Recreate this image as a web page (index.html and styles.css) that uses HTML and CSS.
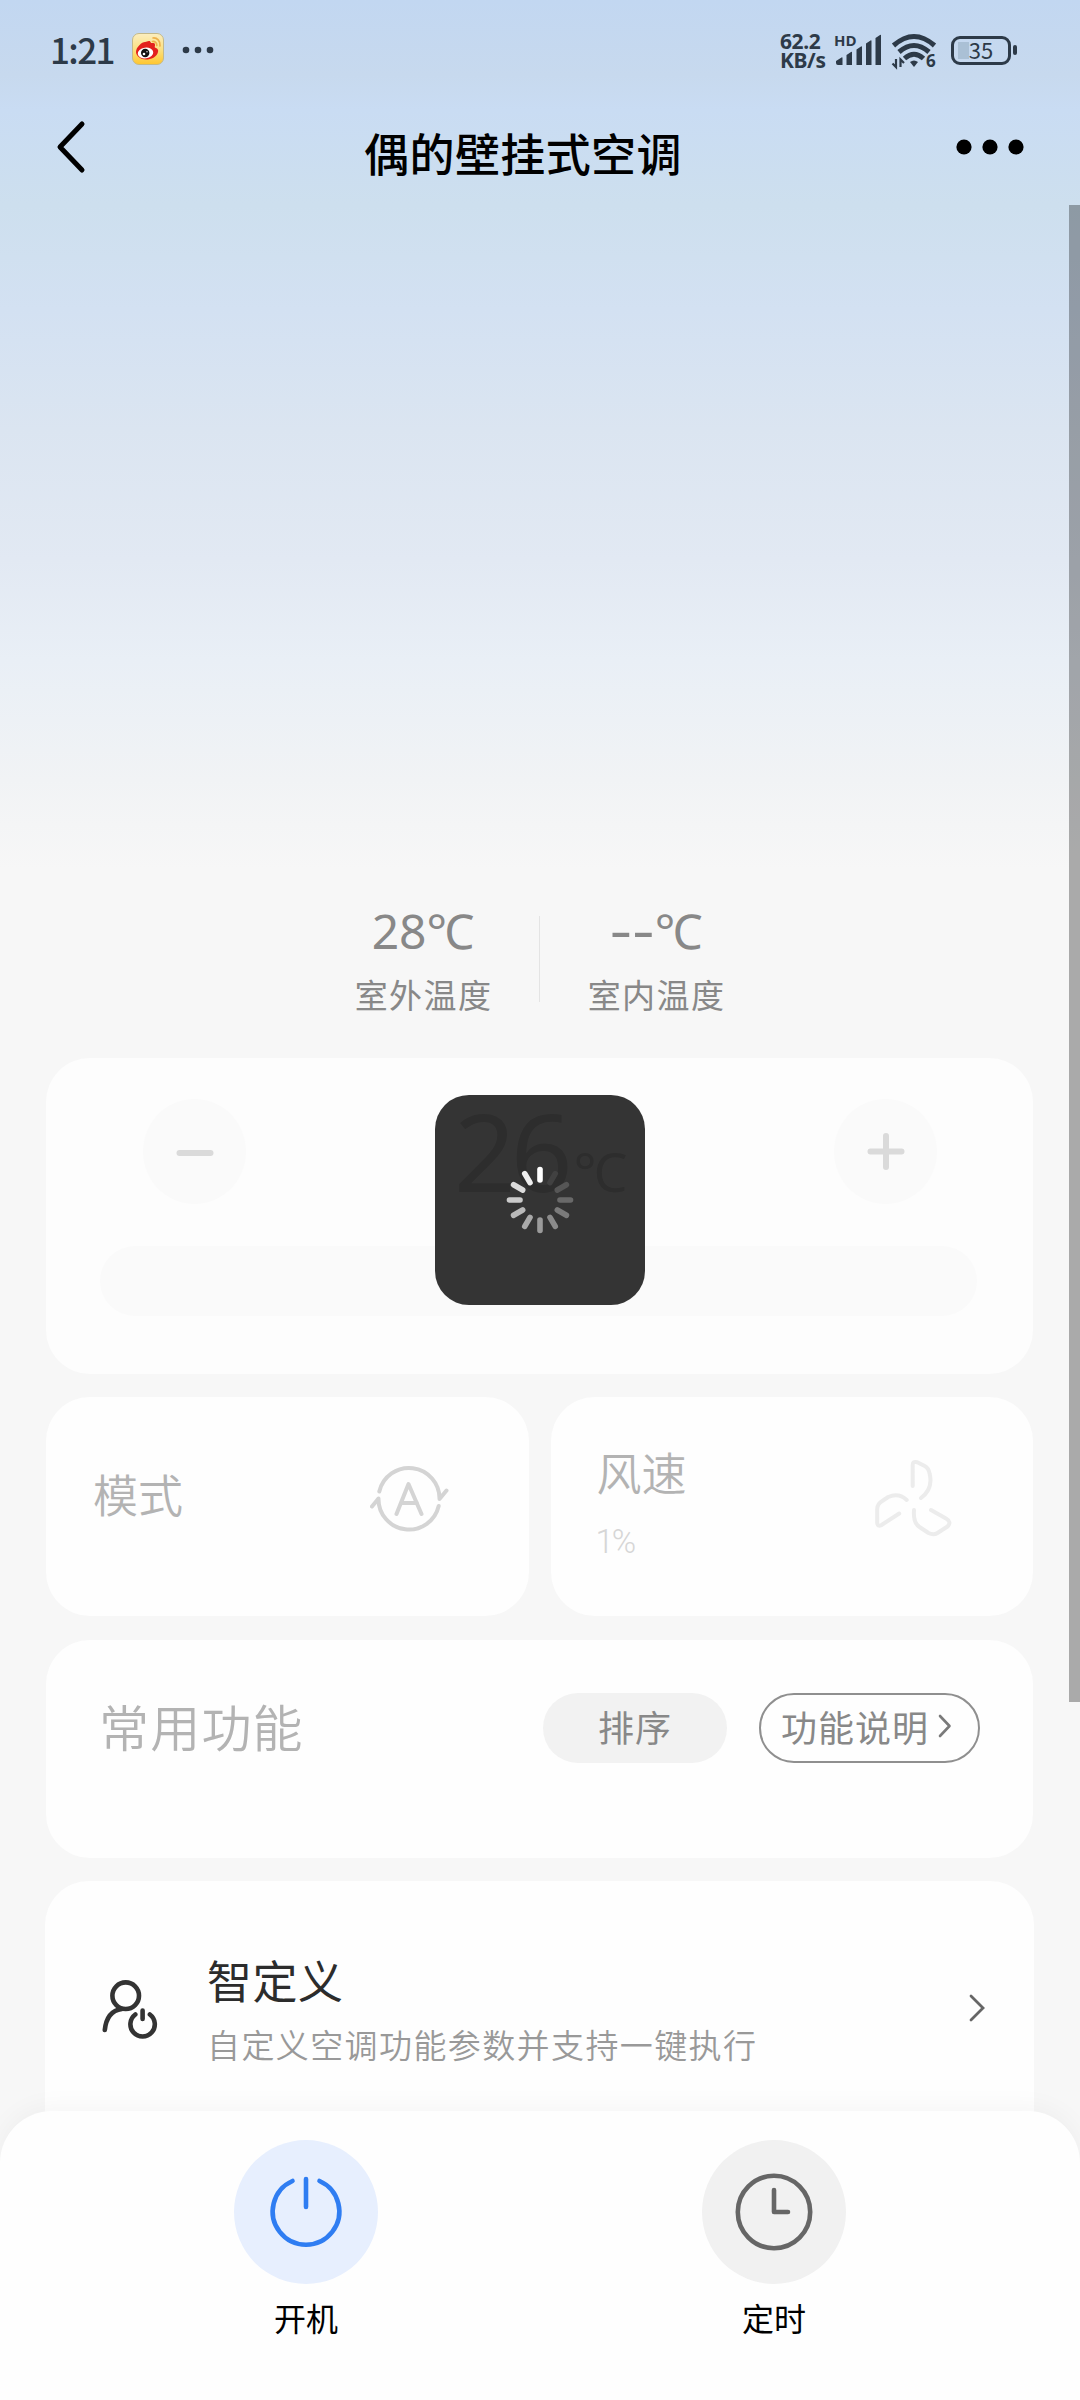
FILE: index.html
```html
<!DOCTYPE html>
<html lang="zh-CN">
<head>
<meta charset="utf-8">
<title>偶的壁挂式空调</title>
<link rel="stylesheet" href="styles.css">
</head>
<body>
<div class="screen">
  <header class="status">
    <span class="clock">1:21</span>
    <svg class="weibo" viewBox="0 0 32 32">
      <defs><linearGradient id="wb" x1="0" y1="0" x2="0" y2="1"><stop offset="0" stop-color="#fbeec0"/><stop offset=".55" stop-color="#fbdf7c"/><stop offset="1" stop-color="#ffc62e"/></linearGradient></defs>
      <rect x=".5" y=".5" width="31" height="31" rx="6.5" fill="url(#wb)" stroke="#c3b98a"/>
      <path d="M4 19c0-5 6-10 9-10 2 0 2-1 4-1s1 2 3 2 3 0 3 2-1 2 1 3 2.500 2 2 4c-1 5-7 7.500-12 7.500S4 23 4 19z" fill="#e3201d"/>
      <ellipse cx="13.500" cy="20" rx="7.800" ry="5.400" fill="#fff" transform="rotate(-8 13.500 20)"/>
      <circle cx="13.200" cy="20" r="4.200" fill="#111"/><circle cx="12" cy="21" r="1.300" fill="#fff"/><circle cx="15" cy="18.800" r=".7" fill="#fff"/>
      <path d="M21 5c4-.5 7.500 3 7 8M20.500 8.500c2.500-.3 4.500 1.500 4.300 4" fill="none" stroke="#eeb04a" stroke-width="1.700" stroke-linecap="round"/>
    </svg>
    <svg class="more-notes" viewBox="0 0 32 8" fill="#2d3a48"><circle cx="4" cy="4" r="3.300"/><circle cx="16" cy="4" r="3.300"/><circle cx="28" cy="4" r="3.300"/></svg>
    <span class="net"><span>62.2</span><span>KB/s</span></span>
    <span class="signal">
      <span class="hd">HD</span>
      <svg viewBox="0 0 48 32" fill="#2d3a48"><path d="M2 27l5.500-3.500q1-.5 1 .5V31H4q-2 0-2-2zM12.500 21l4.500-3q1-.5 1 .5v12.500h-5.500zM22.500 15.500l4.500-3q1-.5 1 .5v18h-5.500zM32 9.500l4.500-3q1-.5 1 .5v24h-5.500zM41.500 4l4.500-3q1-.5 1 .5v29.500h-5.500z"/></svg>
    </span>
    <svg class="wifi" viewBox="0 0 46 38" fill="none" stroke="#2d3a48" stroke-width="5">
      <path d="M2.500 12.500q20.500-18 41 0M8 19q15-13 30 0M13.500 25.500q9.500-8.500 19 0"/>
      <path d="M19 29q4-3 8 0l-4 5z" fill="#2d3a48" stroke="none"/>
      <path d="M5 26v8l-3.500-3.500M9.500 34v-7.500l3.500 3.500" stroke-width="2.200"/>
      <text x="35" y="34" class="wifi-gen">6</text>
    </svg>
    <span class="battery"><span>35</span></span>
  </header>

  <nav class="titlebar">
    <svg class="back" viewBox="0 0 32 54"><path d="M27 4L5 27l22 23"/></svg>
    <h1>偶的壁挂式空调</h1>
    <svg class="menu" viewBox="0 0 68 16"><circle cx="8" cy="8" r="7.600"/><circle cx="34" cy="8" r="7.600"/><circle cx="60" cy="8" r="7.600"/></svg>
  </nav>

  <main class="content">
    <section class="temps">
      <div class="temp"><div class="value">28℃</div><div class="label">室外温度</div></div>
      <div class="divider"></div>
      <div class="temp"><div class="value"><span class="dashes">--</span>℃</div><div class="label">室内温度</div></div>
    </section>

    <section class="card target">
      <div class="stepper">
        <button class="round"><svg viewBox="0 0 40 40"><path d="M4.500 21h31"/></svg></button>
        <div class="setpoint">26<span>℃</span></div>
        <button class="round"><svg viewBox="0 0 40 40"><path d="M4.500 19.500h31M20 4v31"/></svg></button>
      </div>
      <div class="track"></div>
    </section>

    <section class="pair">
      <div class="card tile">
        <div class="tile-name">模式</div>
        <svg class="mode-icon" viewBox="370 1460 80 80"><path d="M379.300 1491.500A30.500 30.500 0 0 1 439.500 1499l7-8.500M438.700 1506A30.500 30.500 0 0 1 378.500 1498.500l-6.500 8M396.500 1514l12-30 13 30M401.500 1503h15.500"/></svg>
      </div>
      <div class="card tile fan">
        <div><div class="tile-name">风速</div><div class="percent">1%</div></div>
        <svg class="fan-icon" viewBox="870 1455 86 86"><path d="M912.700 1486v-21q0-4 4.500-2.800l7.500 3.800q4 2 5 8 3.500 15-8.700 24M906.700 1500q-8-7.500-18.500-3l-6 4q-5 3-5 8v14q.5 4 4 2.200l18-11.700M931 1510l15 8.500q6 3.500 1.500 8l-10 6.500q-4 2.500-9 0l-9-6q-6.500-4-5.500-17"/></svg>
      </div>
    </section>

    <section class="card common">
      <h2>常用功能</h2>
      <button class="pill sort">排序</button>
      <button class="pill help">功能说明<svg viewBox="0 0 14 24"><path d="M2 2l9.500 10L2 22"/></svg></button>
    </section>

    <section class="card custom">
      <svg class="person" viewBox="100 1978 60 62"><circle cx="125.700" cy="1995.700" r="13.300"/><path d="M104.800 2030q2-19 17-21M135.300 2014.500a12.200 12.200 0 1 0 14.600 0M142.600 2010.500v8.500"/></svg>
      <div class="custom-text"><h3>智定义</h3><p>自定义空调功能参数并支持一键执行</p></div>
      <svg class="go" viewBox="0 0 18 30"><path d="M3 3l12 12L3 27"/></svg>
    </section>
  </main>

  <footer class="dock">
    <div class="action">
      <span class="disc power"><svg viewBox="-40 -40 80 80"><path d="M-13.500-31a33.300 33.300 0 1 0 27 0M0-33v28"/></svg></span>
      <span>开机</span>
    </div>
    <div class="action">
      <span class="disc timer"><svg viewBox="-40 -40 80 80"><circle r="36.200"/><path d="M0-22V0H14"/></svg></span>
      <span>定时</span>
    </div>
  </footer>

  <div class="scrollbar"></div>
  <div class="loading">
    <svg viewBox="-35 -35 70 70" stroke-width="5.600" stroke-linecap="round">
      <path d="M0-30.500v10.500" stroke="#fff"/>
      <path d="M0-30.500v10.500" stroke="#414141" transform="rotate(30)"/>
      <path d="M0-30.500v10.500" stroke="#565656" transform="rotate(60)"/>
      <path d="M0-30.500v10.500" stroke="#696969" transform="rotate(90)"/>
      <path d="M0-30.500v10.500" stroke="#7b7b7b" transform="rotate(120)"/>
      <path d="M0-30.500v10.500" stroke="#8b8b8b" transform="rotate(150)"/>
      <path d="M0-30.500v10.500" stroke="#9a9a9a" transform="rotate(180)"/>
      <path d="M0-30.500v10.500" stroke="#a9a9a9" transform="rotate(210)"/>
      <path d="M0-30.500v10.500" stroke="#b9b9b9" transform="rotate(240)"/>
      <path d="M0-30.500v10.500" stroke="#cacaca" transform="rotate(270)"/>
      <path d="M0-30.500v10.500" stroke="#dcdcdc" transform="rotate(300)"/>
      <path d="M0-30.500v10.500" stroke="#eee" transform="rotate(330)"/>
    </svg>
  </div>
</div>
</body>
</html>
```
FILE: styles.css
```css
* { box-sizing: border-box; margin: 0; padding: 0; }
body { font-family: "Noto Sans CJK SC", sans-serif; font-weight: 400; }
h1, h2, h3 { font-weight: 400; }
button { border: 0; background: none; font: inherit; color: inherit; }
svg { display: block; flex: none; }

.screen {
  position: relative;
  width: 1080px;
  height: 2400px;
  overflow: hidden;
  display: flex;
  flex-direction: column;
  background: #f7f7f7 linear-gradient(#c2d7f1 0, #c7d9ee 75px, #c9dcf3 110px, #cddfee 205px, #d3e1f2 310px, #dbe5f1 430px, #e2e9f3 560px, #e9eff6 660px, #f1f3f5 780px, #f7f7f7 870px) no-repeat;
}

/* system status bar */
.status { height: 98px; display: flex; align-items: center; padding-left: 50px; color: #2d3a48; }
.clock { width: 82px; font: 500 35px/40px "Noto Sans CJK SC", sans-serif; letter-spacing: -1.6px; }
.weibo { width: 32px; height: 32px; }
.more-notes { width: 32px; height: 8px; margin: 2px 0 0 18px; }
.net { width: 50px; margin: 4px 0 0 566px; display: flex; flex-direction: column; font: 700 21px/19px "Noto Sans", sans-serif; letter-spacing: -0.4px; }
.signal { position: relative; width: 48px; height: 32px; margin: 2px 0 0 4px; }
.signal svg { width: 48px; height: 32px; }
.hd { position: absolute; left: 0; top: 0; font: 700 15px/13px "Open Sans", sans-serif; }
.wifi { width: 46px; height: 38px; margin: 5px 0 0 9px; }
.wifi-gen { font: 700 17px "Open Sans", sans-serif; fill: #2d3a48; stroke: none; }
.battery { position: relative; width: 60px; height: 29px; margin: 2px 0 0 14px; border: 3.5px solid #2d3a48; border-radius: 9px; display: flex; align-items: center; justify-content: center; background: linear-gradient(#aac0d5, #aac0d5) 4px center / 11px 17px no-repeat; font: 400 22px/20px "Noto Sans CJK SC", sans-serif; padding-bottom: 2px; }
.battery::after { content: ""; position: absolute; right: -9px; top: 6px; width: 4px; height: 10px; border-radius: 2px; background: #2d3a48; }

/* page title */
.titlebar { height: 107px; display: flex; align-items: flex-start; padding: 22px 56px 0 55px; }
.back { width: 32px; height: 54px; fill: none; stroke: #000; stroke-width: 5; stroke-linecap: round; stroke-linejoin: round; }
h1 { flex: 1; text-align: center; font-size: 45px; line-height: 66px; letter-spacing: 0.4px; font-weight: 500; color: #000; padding-left: 3px; }
.menu { width: 68px; height: 16px; margin-top: 19px; }

.content { padding: 705px 47px 0 46px; display: flex; flex-direction: column; }

/* outdoor and indoor readings */
.temps { height: 148px; display: flex; justify-content: center; color: #888; }
.temp { width: 232px; text-align: center; }
.value { display: flex; justify-content: center; height: 60px; font: 400 48px/42px "Noto Sans", "Noto Sans CJK SC", sans-serif; white-space: nowrap; }
.dashes { font-family: "Noto Sans CJK SC", sans-serif; font-size: 66px; line-height: 28px; font-weight: 350; }
.label { font-size: 33px; line-height: 48px; letter-spacing: 1.4px; padding-left: 1px; }
.divider { width: 1px; height: 86px; margin-top: 6px; background: #e4e4e4; }

.card { background: #fefefe; border-radius: 44px; }
.target { height: 316px; background: #fdfdfd; padding: 41px 56px 0 54px; }
.stepper { display: flex; justify-content: space-between; padding: 0 40px 0 43px; height: 147px; }
.round { width: 103px; height: 105px; border-radius: 50%; background: #fafafa; display: flex; align-items: center; justify-content: center; }
.round svg { width: 40px; height: 40px; fill: none; stroke: #dadada; stroke-width: 6; stroke-linecap: round; }
.setpoint { width: 210px; padding-left: 19px; font: 400 108px/103px "Noto Sans", "Noto Sans CJK SC", sans-serif; color: #222; white-space: nowrap; letter-spacing: -5px; }
.setpoint span { font-size: 54px; margin-left: 6px; font-weight: 400; }
.track { height: 70px; border-radius: 35px; background: #fafafa; }

.pair { display: grid; grid-template-columns: 1fr 1fr; gap: 22px; margin-top: 23px; }
.tile { height: 219px; display: flex; justify-content: space-between; padding: 63px 79px 0 47px; }
.tile-name { font-size: 45px; line-height: 68px; color: #b3b3b3; font-weight: 350; }
.mode-icon { width: 80px; height: 80px; fill: none; stroke: #d4d4d4; stroke-width: 4; stroke-linecap: round; stroke-linejoin: round; }
.fan { padding: 41px 77px 0 46px; }
.percent { font: 300 33px/44px Roboto, sans-serif; letter-spacing: -2px; color: #d6d6d6; margin: 14px 0 0 -1px; }
.fan-icon { width: 86px; height: 86px; margin-top: 17px; fill: none; stroke: #ececec; stroke-width: 4; stroke-linecap: round; stroke-linejoin: round; }

.common { height: 218px; margin-top: 24px; display: flex; align-items: flex-start; padding: 53px 53px 0 53px; }
h2 { flex: 1; font-size: 50px; line-height: 65px; letter-spacing: 1.2px; color: #b3b3b3; font-weight: 350; }
.pill { height: 70px; border-radius: 35px; font-size: 36px; line-height: 63px; letter-spacing: 1px; color: #888; display: flex; align-items: center; justify-content: center; padding-bottom: 4px; }
.sort { width: 184px; background: #f2f2f2; }
.help { width: 221px; margin-left: 32px; border: 2px solid #8f8f8f; gap: 9px; padding-right: 6px; }
.help svg { width: 14px; height: 24px; fill: none; stroke: #7a7a7a; stroke-width: 2.600; stroke-linecap: round; stroke-linejoin: round; }

.custom { height: 300px; margin: 23px -1px 0; display: flex; align-items: flex-start; padding: 61px 48px 0 55px; }
.person { width: 60px; height: 62px; margin-top: 36px; fill: none; stroke: #333; stroke-width: 4.600; stroke-linecap: round; }
.custom-text { flex: 1; margin: 2px 0 0 47px; }
h3 { font-size: 45px; line-height: 72px; letter-spacing: 0.5px; color: #2c2c2c; }
p { font-size: 33px; line-height: 56px; letter-spacing: 1.400px; color: #999; font-weight: 350; }
.go { width: 18px; height: 30px; margin-top: 51px; fill: none; stroke: #666; stroke-width: 2.800; stroke-linecap: round; }

/* bottom actions lie over the scrolling content */
.dock { position: absolute; left: 0; right: 0; bottom: 0; height: 289px; padding: 29px 72px 0; background: #fefefe; border-radius: 52px 52px 0 0; box-shadow: 0 -4px 26px rgba(0, 0, 0, .04); display: flex; justify-content: space-between; }
.action { width: 468px; display: flex; flex-direction: column; align-items: center; font-size: 32px; line-height: 66px; color: #000; }
.disc { width: 144px; height: 144px; border-radius: 50%; display: flex; align-items: center; justify-content: center; }
.disc svg { width: 80px; height: 80px; fill: none; stroke-width: 4.600; stroke-linecap: round; stroke-linejoin: round; }
.power { background: #e7effe; }
.power svg { stroke: #2f7df2; }
.timer { background: #f1f1f1; }
.timer svg { stroke: #666; }

.scrollbar { position: absolute; right: 0; top: 205px; width: 11px; height: 1497px; background: rgba(0, 0, 0, .31); }
.loading { position: absolute; left: 435px; top: 1095px; width: 210px; height: 210px; border-radius: 34px; background: rgba(45, 45, 45, .97); display: flex; align-items: center; justify-content: center; }
.loading svg { width: 70px; height: 70px; }
```
